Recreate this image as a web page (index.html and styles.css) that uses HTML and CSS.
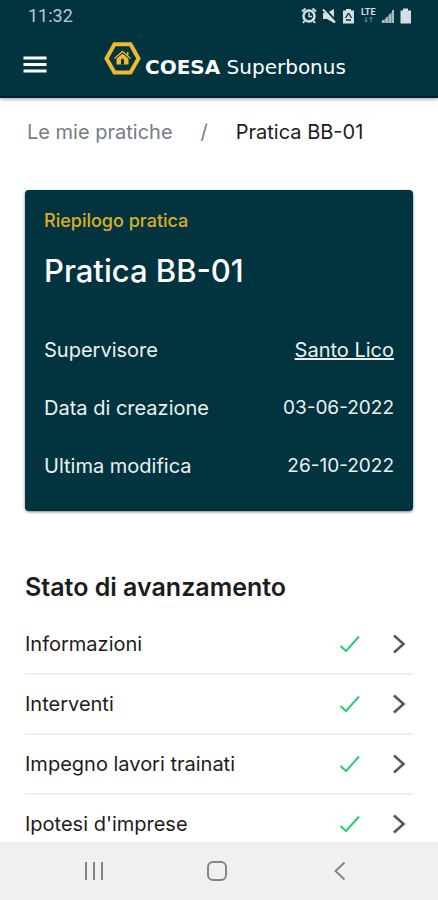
FILE: index.html
```html
<!DOCTYPE html>
<html lang="it">
<head>
<meta charset="utf-8">
<meta name="viewport" content="width=device-width, initial-scale=1">
<title>COESA Superbonus</title>
<link rel="stylesheet" href="styles.css">
</head>
<body>
<svg class="sprite" aria-hidden="true">
  <symbol id="check" viewBox="0 0 22 18"><path d="M1.500 11 7 16 20 1.500"/></symbol>
  <symbol id="chevron" viewBox="0 0 14 20"><path d="M2 1.500 11.500 10 2 18.500"/></symbol>
</svg>
<div class="app">
  <header class="header">
    <div class="status">
      <span class="time">11:32</span>
      <svg class="status-icons" viewBox="0 0 112 18" aria-hidden="true">
        <g fill="none" stroke="#d3dfe2">
          <circle cx="8" cy="9" r="5.500" stroke-width="2.500"/>
          <path d="M1 4.500 4.500 1.500M15 4.500 11.500 1.500M3.500 14 2 16M12.500 14 14 16" stroke-width="2"/>
          <path d="M8 5.500V9.500H11" stroke-width="1.500"/>
        </g>
        <g fill="#d3dfe2">
          <path d="M22 6H26L33 2V16L26 12H22Z"/>
          <path d="M45 2H50V3.500H53V16.500H42V3.500H45Z"/>
        </g>
        <path d="M80 16 93 3V16Z" fill="#6f8d94"/>
        <path d="M81 13H83.500V16H81ZM84.500 10.500H87V16H84.500ZM88 7H90V16H88ZM91 3H93V16H91Z" fill="#a8bdc2"/>
        <path d="M102 1.500H107V3.500H110V16.500H99.500V3.500H102Z" fill="#d3dfe2"/>
        <path d="M23 1 35 14" stroke="#01343f" stroke-width="2"/>
        <path d="M22 2.500 34 15.500" stroke="#d3dfe2" stroke-width="2"/>
        <path d="M47.500 6 44.500 11M47.500 6 50.500 11M45 13H50" fill="none" stroke="#01343f" stroke-width="1.300"/>
        <text class="lte" x="60" y="8">LTE</text>
        <path d="M65 10V15M63.500 13.500 65 15 66.500 13.500M70 15V10M68.500 11.500 70 10 71.500 11.500" fill="none" stroke="#6f8d94"/>
      </svg>
    </div>
    <div class="bar">
      <button class="menu" type="button" aria-label="Menu">
        <svg viewBox="0 0 23 17"><path d="M0 2H23M0 8.500H23M0 15H23" stroke="#fff" stroke-width="3"/></svg>
      </button>
      <a class="brand" href="#">
        <svg class="logo" viewBox="0 0 37 33" aria-hidden="true">
          <path d="M10.500 2.200H26.500L34.500 16.500 26.500 30.500H10.500L2.500 16.500Z" fill="none" stroke="#f2b92f" stroke-width="4"/>
          <path d="M12.500 16.500V22.500H24.500V16.500L18.500 11.500Z" fill="#f2b92f"/>
          <path d="M10.500 16.500 18.500 9.500 26.500 16.500" fill="none" stroke="#f2b92f" stroke-width="1.500"/>
          <path d="M12 16.500 18.500 11 25 16.500" fill="none" stroke="#01343f" stroke-width=".7"/>
          <path d="M23 10H24.500V13H23Z" fill="#f2b92f"/>
          <path d="M17 22.500V17.500Q18.500 15.500 20 17.500V22.500Z" fill="#01343f"/>
        </svg>
        <span class="name"><strong>COESA</strong> Superbonus</span>
      </a>
    </div>
  </header>

  <main class="content">
    <nav class="crumbs" aria-label="Percorso">
      <a href="#">Le mie pratiche</a><span class="slash">/</span><span class="current">Pratica BB-01</span>
    </nav>

    <section class="card">
      <p class="eyebrow">Riepilogo pratica</p>
      <h1>Pratica BB-01</h1>
      <dl>
        <div><dt>Supervisore</dt><dd><a href="#">Santo Lico</a></dd></div>
        <div><dt>Data di creazione</dt><dd class="date">03-06-2022</dd></div>
        <div><dt>Ultima modifica</dt><dd class="date">26-10-2022</dd></div>
      </dl>
    </section>

    <section class="progress">
      <h2>Stato di avanzamento</h2>
      <ul>
        <li><a href="#"><span>Informazioni</span><svg class="check"><use href="#check"/></svg><svg class="chevron"><use href="#chevron"/></svg></a></li>
        <li><a href="#"><span>Interventi</span><svg class="check"><use href="#check"/></svg><svg class="chevron"><use href="#chevron"/></svg></a></li>
        <li><a href="#"><span>Impegno lavori trainati</span><svg class="check"><use href="#check"/></svg><svg class="chevron"><use href="#chevron"/></svg></a></li>
        <li><a href="#"><span>Ipotesi d'imprese</span><svg class="check"><use href="#check"/></svg><svg class="chevron"><use href="#chevron"/></svg></a></li>
      </ul>
    </section>
  </main>

  <nav class="system" aria-label="Sistema">
    <button type="button" aria-label="Recenti"><svg viewBox="0 0 22 22"><path d="M3 2V20M11 2V20M19 2V20"/></svg></button>
    <button type="button" aria-label="Home"><svg viewBox="0 0 22 22"><rect x="2" y="2" width="18" height="18" rx="5"/></svg></button>
    <button type="button" aria-label="Indietro"><svg viewBox="0 0 22 22"><path d="M15.500 2.500 6.500 11 15.500 19.500"/></svg></button>
  </nav>
</div>
</body>
</html>
```
FILE: styles.css
```css
* { box-sizing: border-box; }

body, h1, h2, p, ul, dl, dd { margin: 0; }

body {
  background: #fff;
  color: #1c1c1c;
  font: 20px/24px Inter, "Liberation Sans", sans-serif;
}

a { color: inherit; text-decoration: none; }

button {
  display: flex;
  justify-content: center;
  align-items: center;
  padding: 0;
  border: 0;
  background: none;
}

svg { display: block; }

.sprite { display: none; }

.app {
  display: flex;
  flex-direction: column;
  height: 100vh;
}

.header {
  position: relative;
  flex: none;
  padding-bottom: 16px;
  background: #01343f;
  border-bottom: 2px solid #021f31;
  box-shadow: 0 1px 4px rgba(0, 0, 0, .4);
}

.status {
  display: flex;
  justify-content: space-between;
  align-items: center;
  height: 32px;
  padding: 0 25px 0 28px;
  color: #b9cbd0;
  font-family: Roboto, sans-serif;
  font-size: 18px;
}

.status-icons { width: 112px; height: 18px; }

.lte {
  fill: #d3dfe2;
  font: 700 9px Roboto, sans-serif;
}

.bar {
  display: flex;
  align-items: flex-start;
  gap: 57px;
  height: 48px;
  padding: 10px 23px 0;
}

.menu { padding-top: 14px; }
.menu svg { width: 24px; height: 17px; }

.brand {
  display: flex;
  align-items: flex-start;
  gap: 4px;
  color: #fff;
  font: 20px/24px "DejaVu Sans", sans-serif;
  white-space: nowrap;
}

.logo {
  width: 37px;
  height: 33px;
}

.name { padding-top: 13px; }

.content {
  flex: 1;
  min-height: 0;
  padding: 22px 25px 0;
  overflow-y: auto;
  scrollbar-width: none;
}

.crumbs {
  display: flex;
  padding-left: 2px;
  color: #747c88;
}

.slash { padding: 0 28px; }
.current { color: #1c1c1c; }

.card {
  margin-top: 46px;
  padding: 19px 19px 16px;
  border-radius: 4px;
  background: #01343f;
  color: #fff;
  box-shadow: 0 1px 3px rgba(0, 0, 0, .5);
}

.eyebrow {
  color: #dfad22;
  font-size: 18px;
  font-weight: 500;
}

h1 {
  margin-top: 20px;
  font-size: 31px;
  font-weight: 500;
  line-height: 36px;
}

dl { margin-top: 32px; }

dl div {
  display: flex;
  justify-content: space-between;
  align-items: center;
  height: 58px;
  color: #edf1f2;
}

dd a { text-decoration: underline; }

.date { font-size: 19px; }

.progress { margin-top: 60px; }

h2 {
  font-size: 25px;
  font-weight: 600;
  line-height: 32px;
}

ul {
  margin-top: 12px;
  padding: 0;
  list-style: none;
}

li a {
  display: flex;
  align-items: center;
  height: 60px;
  border-bottom: 2px solid #efefef;
}

li span { flex: 1; }

.check, .chevron { fill: none; }

.check {
  width: 22px;
  height: 18px;
  margin-right: 31px;
  stroke: #2ecc71;
  stroke-width: 2;
}

.chevron {
  width: 14px;
  height: 20px;
  margin-right: 7px;
  stroke: #555;
  stroke-width: 2.5;
}

.system {
  display: flex;
  flex: none;
  justify-content: space-around;
  height: 58px;
  padding: 0 36px 0 32px;
  background: #f0f0f0;
}

.system button { flex: 1; }

.system svg {
  width: 22px;
  height: 22px;
  fill: none;
  stroke: #858585;
  stroke-width: 2;
}
```
